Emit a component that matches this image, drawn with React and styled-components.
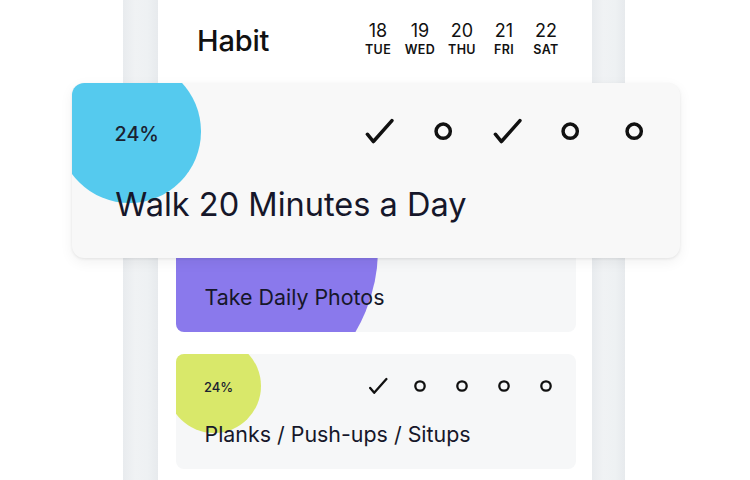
import styled, { createGlobalStyle } from "styled-components";

const ZOOM = 1.52; // the featured row is drawn larger than the rest
const u = (n) => (p) => `${n * (p.$featured ? ZOOM : 1)}px`;

const DAYS = [
	{ num: "18", name: "TUE" },
	{ num: "19", name: "WED" },
	{ num: "20", name: "THU" },
	{ num: "21", name: "FRI" },
	{ num: "22", name: "SAT" },
];

const HABITS = [
	{ title: "Walk 20 Minutes a Day", pct: "24%", color: "#55caee", radius: 47, marks: [1, 0, 1, 0, 0], featured: true },
	{ title: "Take Daily Photos", pct: "68%", color: "#8a79ec", radius: 164, marks: [1, 1, 0, 1, 0] },
	{ title: "Planks / Push-ups / Situps", pct: "24%", color: "#d9e86a", radius: 47, marks: [1, 0, 0, 0, 0] },
];

const GlobalStyle = createGlobalStyle`
	body {
		margin: 0;
		background: #ffffff;
		font-family: Inter, "Helvetica Neue", Arial, sans-serif;
		color: #111111;
	}
`;

function Mark({ done, featured }) {
	return (
		<MarkIcon $featured={featured} viewBox="0 0 20 20">
			{done ? (
				<path d="M2.2 12 L6.2 16.8 L18.4 3" fill="none" stroke="#111" strokeWidth="2.3" strokeLinecap="round" strokeLinejoin="round" />
			) : (
				<circle cx="10" cy="10" r="4.7" fill="none" stroke="#111" strokeWidth="2.3" />
			)}
		</MarkIcon>
	);
}

function HabitCard({ habit }) {
	const { title, pct, color, radius, marks, featured } = habit;
	return (
		<Card $featured={featured}>
			<Blob $featured={featured} $color={color} $r={radius} />
			<TopRow $featured={featured}>
				<Percent $featured={featured}>{pct}</Percent>
				<Marks>
					{marks.map((m, i) => (
						<Cell key={i} $featured={featured}>
							<Mark done={m} featured={featured} />
						</Cell>
					))}
				</Marks>
			</TopRow>
			<Title $featured={featured}>{title}</Title>
		</Card>
	);
}

export default function App() {
	return (
		<>
			<GlobalStyle />
			<Stage>
				<Bezel $side="left" />
				<Screen>
					<Header>
						<Heading>Habit</Heading>
						<Dates>
							{DAYS.map((d) => (
								<DateCell key={d.num}>
									<DateNum>{d.num}</DateNum>
									<DayName>{d.name}</DayName>
								</DateCell>
							))}
						</Dates>
					</Header>
					<List>
						{HABITS.map((h) => (
							<HabitCard key={h.title} habit={h} />
						))}
					</List>
				</Screen>
				<Bezel $side="right" />
			</Stage>
		</>
	);
}

const Stage = styled.div`
	width: 750px;
	height: 480px;
	overflow: hidden;
	display: flex;
	padding-left: 123px;
	box-sizing: border-box;
`;

const Bezel = styled.div`
	width: ${(p) => (p.$side === "left" ? 35 : 33)}px;
	height: 480px;
	flex-shrink: 0;
	background: linear-gradient(90deg, #e8ebee 0%, #f0f2f4 35%, #eef1f3 70%, #e7eaed 100%);
`;

const Screen = styled.div`
	width: 434px;
	flex-shrink: 0;
	background: #ffffff;
	display: flex;
	flex-direction: column;
	padding: 0 16px 0 18px;
	box-sizing: border-box;
`;

const Header = styled.div`
	flex-shrink: 0;
	height: 78px;
	display: flex;
	align-items: center;
	justify-content: space-between;
	padding: 0 9px 0 21px;
	margin-bottom: 5px;
`;

const Heading = styled.div`
	font-size: 29px;
	font-weight: 500;
	letter-spacing: -0.2px;
	margin-top: 2px;
`;

const Dates = styled.div`
	display: flex;
`;

const DateCell = styled.div`
	width: 42px;
	display: flex;
	flex-direction: column;
	align-items: center;
`;

const DateNum = styled.div`
	font-size: 18px;
	line-height: 19px;
`;

const DayName = styled.div`
	font-size: 12.5px;
	font-weight: 600;
	line-height: 14px;
	margin-top: 3px;
	letter-spacing: 0.4px;
`;

const List = styled.div`
	flex-shrink: 0;
	display: flex;
	flex-direction: column;
	align-items: center;
`;

const Card = styled.div`
	position: relative;
	z-index: ${(p) => (p.$featured ? 2 : 1)};
	flex-shrink: 0;
	width: ${u(400)};
	height: ${u(115)};
	margin-bottom: ${(p) => (p.$featured ? -41 : 22)}px;
	border-radius: ${u(8)};
	background: ${(p) => (p.$featured ? "#f8f8f8" : "#f6f7f8")};
	box-shadow: ${(p) => (p.$featured ? "0 1px 3px rgba(0,0,0,0.08), 0 4px 14px rgba(0,0,0,0.06)" : "none")};
	overflow: hidden;
	display: flex;
	flex-direction: column;
	padding-left: ${u(27)};
	box-sizing: border-box;
`;

const Blob = styled.div`
	position: absolute;
	left: ${(p) => (38 - p.$r) * (p.$featured ? ZOOM : 1)}px;
	top: ${(p) => (32 - p.$r) * (p.$featured ? ZOOM : 1)}px;
	width: ${(p) => 2 * p.$r * (p.$featured ? ZOOM : 1)}px;
	height: ${(p) => 2 * p.$r * (p.$featured ? ZOOM : 1)}px;
	border-radius: 50%;
	background: ${(p) => p.$color};
`;

const TopRow = styled.div`
	position: relative;
	height: ${u(64)};
	display: flex;
	align-items: center;
	justify-content: space-between;
	padding-right: ${u(9)};
`;

const Percent = styled.div`
	font-size: ${u(13)};
	font-weight: 500;
	color: #1b2230;
	margin-top: ${u(2.5)};
	margin-left: ${u(1)};
`;

const Marks = styled.div`
	display: flex;
`;

const Cell = styled.div`
	width: ${u(42)};
	display: flex;
	justify-content: center;
`;

const MarkIcon = styled.svg`
	width: ${u(20)};
	height: ${u(20)};
	display: block;
`;

const Title = styled.div`
	position: relative;
	font-size: ${u(21.4)};
	line-height: ${u(30)};
	margin-top: ${u(1.2)};
	margin-left: ${u(1.5)};
	color: #16172a;
`;
